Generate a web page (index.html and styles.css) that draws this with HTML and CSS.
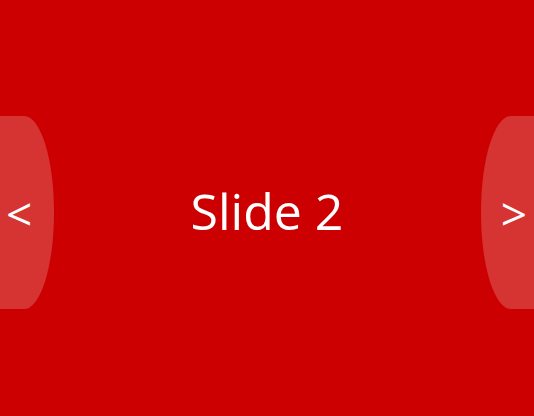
FILE: index.html
```html
<!DOCTYPE html>
<html lang="en">
<head>
<meta charset="utf-8">
<title>Slider</title>
<link rel="stylesheet" href="styles.css">
</head>
<body>
  <div class="slider">
    <div class="slide">Slide 2</div>
    <button class="arrow arrow-prev" type="button">&lt;</button>
    <button class="arrow arrow-next" type="button">&gt;</button>
  </div>
</body>
</html>
```
FILE: styles.css
```css
html, body {
  margin: 0;
  padding: 0;
}

body {
  font-family: "Open Sans", "DejaVu Sans", sans-serif;
}

.slider {
  position: relative;
  width: 534px;
  height: 416px;
  background: #cc0000;
  overflow: hidden;
}

.slide {
  height: 100%;
  display: flex;
  align-items: center;
  justify-content: center;
  color: #ffffff;
  font-size: 50px;
  line-height: 1;
  padding-top: 6px;
  box-sizing: border-box;
}

.arrow {
  position: absolute;
  top: calc(50% - 92px);
  width: 54px;
  height: 193px;
  border: 0;
  padding: 0;
  background: rgba(255, 255, 255, 0.2);
  color: #ffffff;
  font-family: "Open Sans", "DejaVu Sans", sans-serif;
  font-size: 46px;
  font-weight: 400;
  line-height: 1;
  cursor: pointer;
  display: flex;
  align-items: center;
}

.arrow-prev {
  left: 0;
  border-radius: 0 30px 30px 0 / 0 96px 96px 0;
  justify-content: flex-start;
  padding-left: 6px;
}

.arrow-next {
  right: 0;
  width: 53px;
  border-radius: 30px 0 0 30px / 96px 0 0 96px;
  justify-content: flex-end;
  padding-right: 7px;
}
```
